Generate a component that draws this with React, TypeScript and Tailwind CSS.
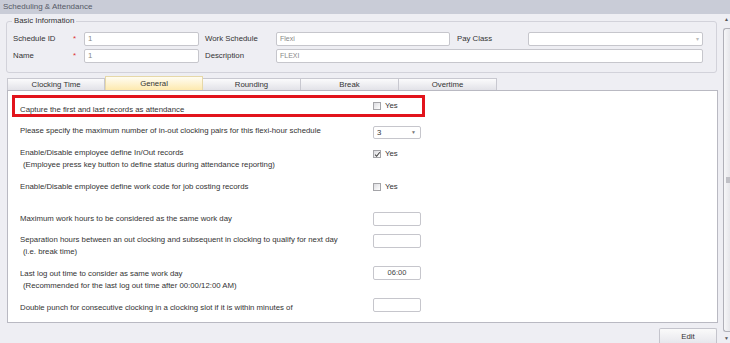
import React from "react";

// Scheduling & Attendance - tab General
const font = { fontFamily: '"Liberation Sans", Arial, sans-serif' };

function Check({ checked }: { checked?: boolean }) {
  return (
    <span className="relative inline-block h-[8px] w-[8px] border border-[#a4a4a8] bg-gradient-to-br from-[#dcdce0] to-white">
      {checked ? (
        <svg viewBox="0 0 8 8" className="absolute left-0 top-0 h-[7px] w-[7px]">
          <path d="M1.2 4.2 L3 6 L6.6 1.4" fill="none" stroke="#444" strokeWidth="1.2" />
        </svg>
      ) : null}
    </span>
  );
}

function YesBox({ checked }: { checked?: boolean }) {
  return (
    <div className="flex items-center gap-[4px] leading-[10px]">
      <Check checked={checked} />
      <span>Yes</span>
    </div>
  );
}

function SmallInput({ value }: { value?: string }) {
  return (
    <div className="flex h-[14px] w-[48px] items-center justify-center rounded-[2px] border border-[#c6c6cc] bg-white text-[7.5px] text-[#444]">
      {value}
    </div>
  );
}

export default function App() {
  const tabs = ["Clocking Time", "General", "Rounding", "Break", "Overtime"];

  return (
    <div className="flex h-[343px] w-[730px] flex-col overflow-hidden bg-[#eeeef3] text-[7.8px] text-[#333]" style={font}>
      <div className="flex h-[14px] shrink-0 items-center bg-[#c9ccd7] pl-[3px] text-[8px] text-[#555a66]">
        Scheduling &amp; Attendance
      </div>

      <div className="flex min-h-0 flex-1">
        <div className="w-[718px] shrink-0">
          <fieldset className="ml-[6px] mt-[1px] w-[711px] rounded-[3px] border border-[#d2d2da] pb-[9px] pl-[6px]">
            <legend className="-ml-[1px] px-[2px] leading-[12px] text-[#333]">Basic Information</legend>
            <div className="mt-[5px] flex h-[14px] items-center">
              <div className="w-[60px]">Schedule ID</div>
              <div className="w-[11px] text-[#d33]">*</div>
              <div className="flex h-[14px] w-[115px] items-center rounded-[2px] border border-[#c6c6cc] bg-white pl-[3px] text-[#888]">1</div>
              <div className="ml-[6px] w-[71px]">Work Schedule</div>
              <div className="flex h-[14px] w-[174px] items-center rounded-[2px] border border-[#c6c6cc] bg-white pl-[3px] text-[7px] text-[#888]">Flexi</div>
              <div className="ml-[7px] w-[71px]">Pay Class</div>
              <div className="flex h-[14px] w-[175px] items-center justify-end rounded-[2px] border border-[#c6c6cc] bg-white pr-[3px] text-[6px] text-[#bbb]">▾</div>
            </div>
            <div className="mt-[3px] flex h-[14px] items-center">
              <div className="w-[60px]">Name</div>
              <div className="w-[11px] text-[#d33]">*</div>
              <div className="flex h-[14px] w-[115px] items-center rounded-[2px] border border-[#c6c6cc] bg-white pl-[3px] text-[#888]">1</div>
              <div className="ml-[6px] w-[71px]">Description</div>
              <div className="flex h-[14px] w-[427px] items-center rounded-[2px] border border-[#c6c6cc] bg-white pl-[3px] text-[7px] text-[#888]">FLEXI</div>
            </div>
          </fieldset>

          <div className="ml-[7px] mt-[3px] flex h-[14px] items-end">
            {tabs.map((tab) =>
              tab === "General" ? (
                <div
                  key={tab}
                  className="flex h-[14px] w-[98px] items-center justify-center border border-b-0 border-[#e6d8a8] bg-gradient-to-b from-[#fffdf2] to-[#fde9ae] pt-[1px]"
                >
                  {tab}
                </div>
              ) : (
                <div
                  key={tab}
                  className="flex h-[12px] w-[98px] items-center justify-center border border-b-0 border-l-0 border-[#c8c8d0] bg-gradient-to-b from-[#fbfbfc] to-[#e2e2e8] first:border-l"
                >
                  {tab}
                </div>
              )
            )}
          </div>

          <div className="ml-[7px] h-[233px] w-[711px] border border-[#b9b9c2] bg-white">
            <div className="ml-[4px] mt-[4px] h-[22px] w-[413px] border-[3px] border-[#e2141c] pl-[5px]">
              <div className="flex">
                <div className="mt-[6px] w-[353px] leading-[12px]">Capture the first and last records as attendance</div>
                <div className="mt-[3px]">
                  <YesBox />
                </div>
              </div>
            </div>

            <div className="pl-[12px]">
              <div className="mt-[8px] flex">
                <div className="w-[353px] leading-[12px]">
                  Please specify the maximum number of in-out clocking pairs for this flexi-hour schedule
                </div>
                <div className="mt-[1px] flex h-[13px] w-[48px] items-center justify-between rounded-[2px] border border-[#c6c6cc] bg-white pl-[3px] pr-[4px]">
                  <span>3</span>
                  <span className="text-[5px] text-[#777]">▼</span>
                </div>
              </div>

              <div className="mt-[8px] flex">
                <div className="w-[353px] leading-[12px]">
                  <div>Enable/Disable employee define In/Out records</div>
                  <div className="pl-[3px]">(Employee press key button to define status during attendance reporting)</div>
                </div>
                <div className="mt-[2px]">
                  <YesBox checked />
                </div>
              </div>

              <div className="mt-[10px] flex">
                <div className="w-[353px] leading-[12px]">Enable/Disable employee define work code for job costing records</div>
                <div className="mt-[1px]">
                  <YesBox />
                </div>
              </div>

              <div className="mt-[19px] flex">
                <div className="w-[353px] pt-[1px] leading-[12px]">Maximum work hours to be considered as the same work day</div>
                <SmallInput />
              </div>

              <div className="mt-[8px] flex">
                <div className="w-[353px] leading-[12px]">
                  <div>Separation hours between an out clocking and subsequent in clocking to qualify for next day</div>
                  <div className="pl-[3px]">(i.e. break time)</div>
                </div>
                <SmallInput />
              </div>

              <div className="mt-[8px] flex">
                <div className="w-[353px] pt-[2px] leading-[12px]">
                  <div>Last log out time to consider as same work day</div>
                  <div className="pl-[3px]">(Recommended for the last log out time after 00:00/12:00 AM)</div>
                </div>
                <SmallInput value="06:00" />
              </div>

              <div className="mt-[6px] flex">
                <div className="w-[353px] pt-[4px] leading-[12px]">
                  Double punch for consecutive clocking in a clocking slot if it is within minutes of
                </div>
                <SmallInput />
              </div>
            </div>
          </div>

          <div className="mt-[5px] flex justify-end pr-[1px]">
            <div className="flex h-[16px] w-[58px] items-center justify-center rounded-t-[2px] border border-b-0 border-[#c4c4cc] bg-gradient-to-b from-[#fafafa] to-[#e6e6ec] text-[#333]">
              Edit
            </div>
          </div>
        </div>

        <div className="flex w-[12px] flex-col items-end">
          <div className="h-[14px] w-[7px] pt-[1px] text-center text-[5px] leading-[8px] text-[#555]">▲</div>
          <div className="flex h-[304px] w-[7px] items-center rounded-tl-[3px] rounded-bl-[3px] border border-r-0 border-[#b0b0b8] bg-gradient-to-r from-[#f6f6f8] to-[#e6e6ea]">
            <div className="ml-[2px] h-[6px] w-[5px] bg-[#c0c0c6]" />
          </div>
          <div className="w-[7px] pt-[2px] text-center text-[5px] leading-[8px] text-[#555]">▼</div>
        </div>
      </div>
    </div>
  );
}
